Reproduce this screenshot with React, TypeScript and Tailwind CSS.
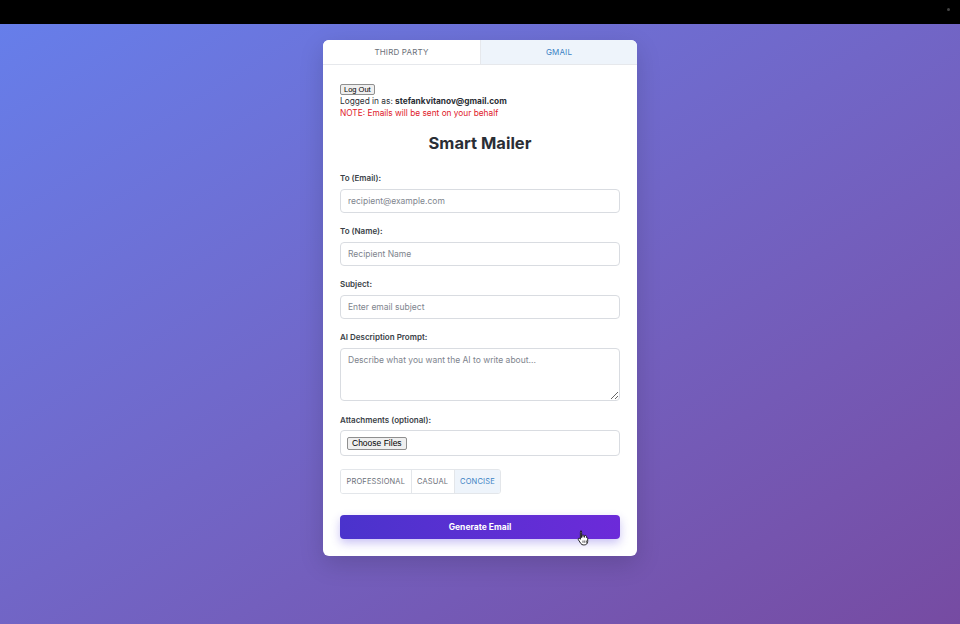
import { useState } from "react";

const tones = ["professional", "casual", "concise"];

function HandCursor() {
  return (
    <svg width="13" height="16" viewBox="0 0 13 16" className="absolute right-[30px] top-[15px]">
      <path
        d="M3.5 1.2c.7 0 1.1.5 1.1 1.1v5.2l.4-.1V5.9c0-.6.5-1 1-1s1 .4 1 1v1.4l.4-.1v-.8c0-.6.5-1 1-1s1 .4 1 1v1.1l.3-.1c.5 0 1 .4 1 1v3c0 2.1-1.4 3.5-3.4 3.5H6.3c-1 0-1.800-.5-2.4-1.3L1.4 9.8c-.4-.5-.3-1.1.2-1.4.4-.3 1-.2 1.3.2l.5.7V2.3c0-.6.5-1.1 1.1-1.1z"
        fill="#fff"
        stroke="#111"
        strokeWidth="0.9"
        strokeLinejoin="round"
      />
      <path d="M6 10.5v2.3M7.8 10.5v2.3M9.6 10.5v2.3" stroke="#111" strokeWidth="0.7" />
    </svg>
  );
}

export default function App() {
  const [tone, setTone] = useState("concise");
  const [tab, setTab] = useState("gmail");

  const inputCls =
    "w-full h-[24px] rounded-[4px] border border-[#d9dce1] bg-white px-[7px] text-[8.5px] text-gray-700 placeholder:text-[#80858e] outline-none";
  const labelCls = "block h-[12px] leading-[12px] text-[8px] font-semibold text-[#3a3f47]";

  return (
    <div className="flex min-h-screen flex-col font-['Inter',sans-serif]">
      {/* window top bar */}
      <div className="relative h-[24px] bg-black">
        <div className="absolute right-[10px] top-[8px] h-[3px] w-[3px] rounded-full bg-[#444]"></div>
      </div>

      <div className="flex h-[600px] justify-center bg-gradient-to-br from-[#667eea] to-[#764ba2] pt-[16px]">
        <div className="h-[516px] w-[314px] overflow-hidden rounded-[6px] bg-white shadow-[0_8px_24px_rgba(0,0,0,0.15)]">
          {/* tabs */}
          <div className="grid h-[25px] grid-cols-2 border-b border-[#e6e8ec]">
            <button
              onClick={() => setTab("third")}
              className={`text-[8px] uppercase tracking-[0.02em] ${
                tab === "third" ? "bg-[#eef4fb] text-[#3b82c4]" : "bg-white text-[#6b7079]"
              }`}
            >
              Third Party
            </button>
            <button
              onClick={() => setTab("gmail")}
              className={`border-l border-[#e6e8ec] text-[8px] uppercase tracking-[0.02em] ${
                tab === "gmail" ? "bg-[#eef4fb] text-[#3b82c4]" : "bg-white text-[#6b7079]"
              }`}
            >
              Gmail
            </button>
          </div>

          <div className="px-[17px] pt-[19px]">
            <button className="block h-[11px] rounded-[2px] border border-[#8f8f8f] bg-[#efefef] px-[3px] font-['Liberation_Sans',sans-serif] text-[7.5px] leading-[9px] text-black">
              Log Out
            </button>
            <p className="h-[12px] text-[8.3px] leading-[12px] text-[#2b2f36]">
              Logged in as: <span className="font-bold">stefankvitanov@gmail.com</span>
            </p>
            <p className="h-[12px] text-[8.3px] leading-[12px] text-[#e0202a]">
              NOTE: Emails will be sent on your behalf
            </p>

            <h1 className="mt-[13px] h-[22px] text-center text-[16.5px] font-bold leading-[22px] text-[#2a2e35]">
              Smart Mailer
            </h1>

            <div className="mt-[18px] flex flex-col">
              <label className={labelCls}>To (Email):</label>
              <input className={`mt-[5px] ${inputCls}`} placeholder="recipient@example.com" />

              <label className={`mt-[12px] ${labelCls}`}>To (Name):</label>
              <input className={`mt-[5px] ${inputCls}`} placeholder="Recipient Name" />

              <label className={`mt-[12px] ${labelCls}`}>Subject:</label>
              <input className={`mt-[5px] ${inputCls}`} placeholder="Enter email subject" />

              <label className={`mt-[12px] ${labelCls}`}>AI Description Prompt:</label>
              <textarea
                className="mt-[5px] h-[53px] w-full resize-y rounded-[4px] border border-[#d9dce1] px-[7px] py-[5px] text-[8.5px] text-gray-700 placeholder:text-[#80858e] outline-none"
                placeholder="Describe what you want the AI to write about..."
              />

              <label className={`mt-[13px] ${labelCls}`}>Attachments (optional):</label>
              <div className="mt-[4px] flex h-[26px] items-center rounded-[4px] border border-[#d9dce1] px-[6px]">
                <span className="h-[13px] rounded-[2px] border border-[#8f8f8f] bg-[#efefef] px-[4px] font-['Liberation_Sans',sans-serif] text-[8.5px] leading-[11px] text-black">
                  Choose Files
                </span>
              </div>

              <div className="mt-[13px] flex h-[25px] self-start overflow-hidden rounded-[3px] border border-[#e3e6ea]">
                {tones.map((t, i) => (
                  <button
                    key={t}
                    onClick={() => setTone(t)}
                    className={`px-[5.5px] text-[7.5px] uppercase tracking-[0.02em] ${i > 0 ? "border-l border-[#e3e6ea]" : ""} ${
                      tone === t ? "bg-[#eef4fb] text-[#3b82c4]" : "bg-white text-[#6b7079]"
                    }`}
                  >
                    {t}
                  </button>
                ))}
              </div>

              <div className="relative mt-[21px] h-[24px]">
                <button className="block h-[24px] w-full rounded-[4px] bg-gradient-to-r from-[#4a33cc] to-[#6c2ad9] text-[8.5px] font-bold text-white shadow-[0_4px_10px_rgba(79,57,221,0.3)]">
                  Generate Email
                </button>
                <HandCursor />
              </div>
            </div>
          </div>
        </div>
      </div>
    </div>
  );
}
